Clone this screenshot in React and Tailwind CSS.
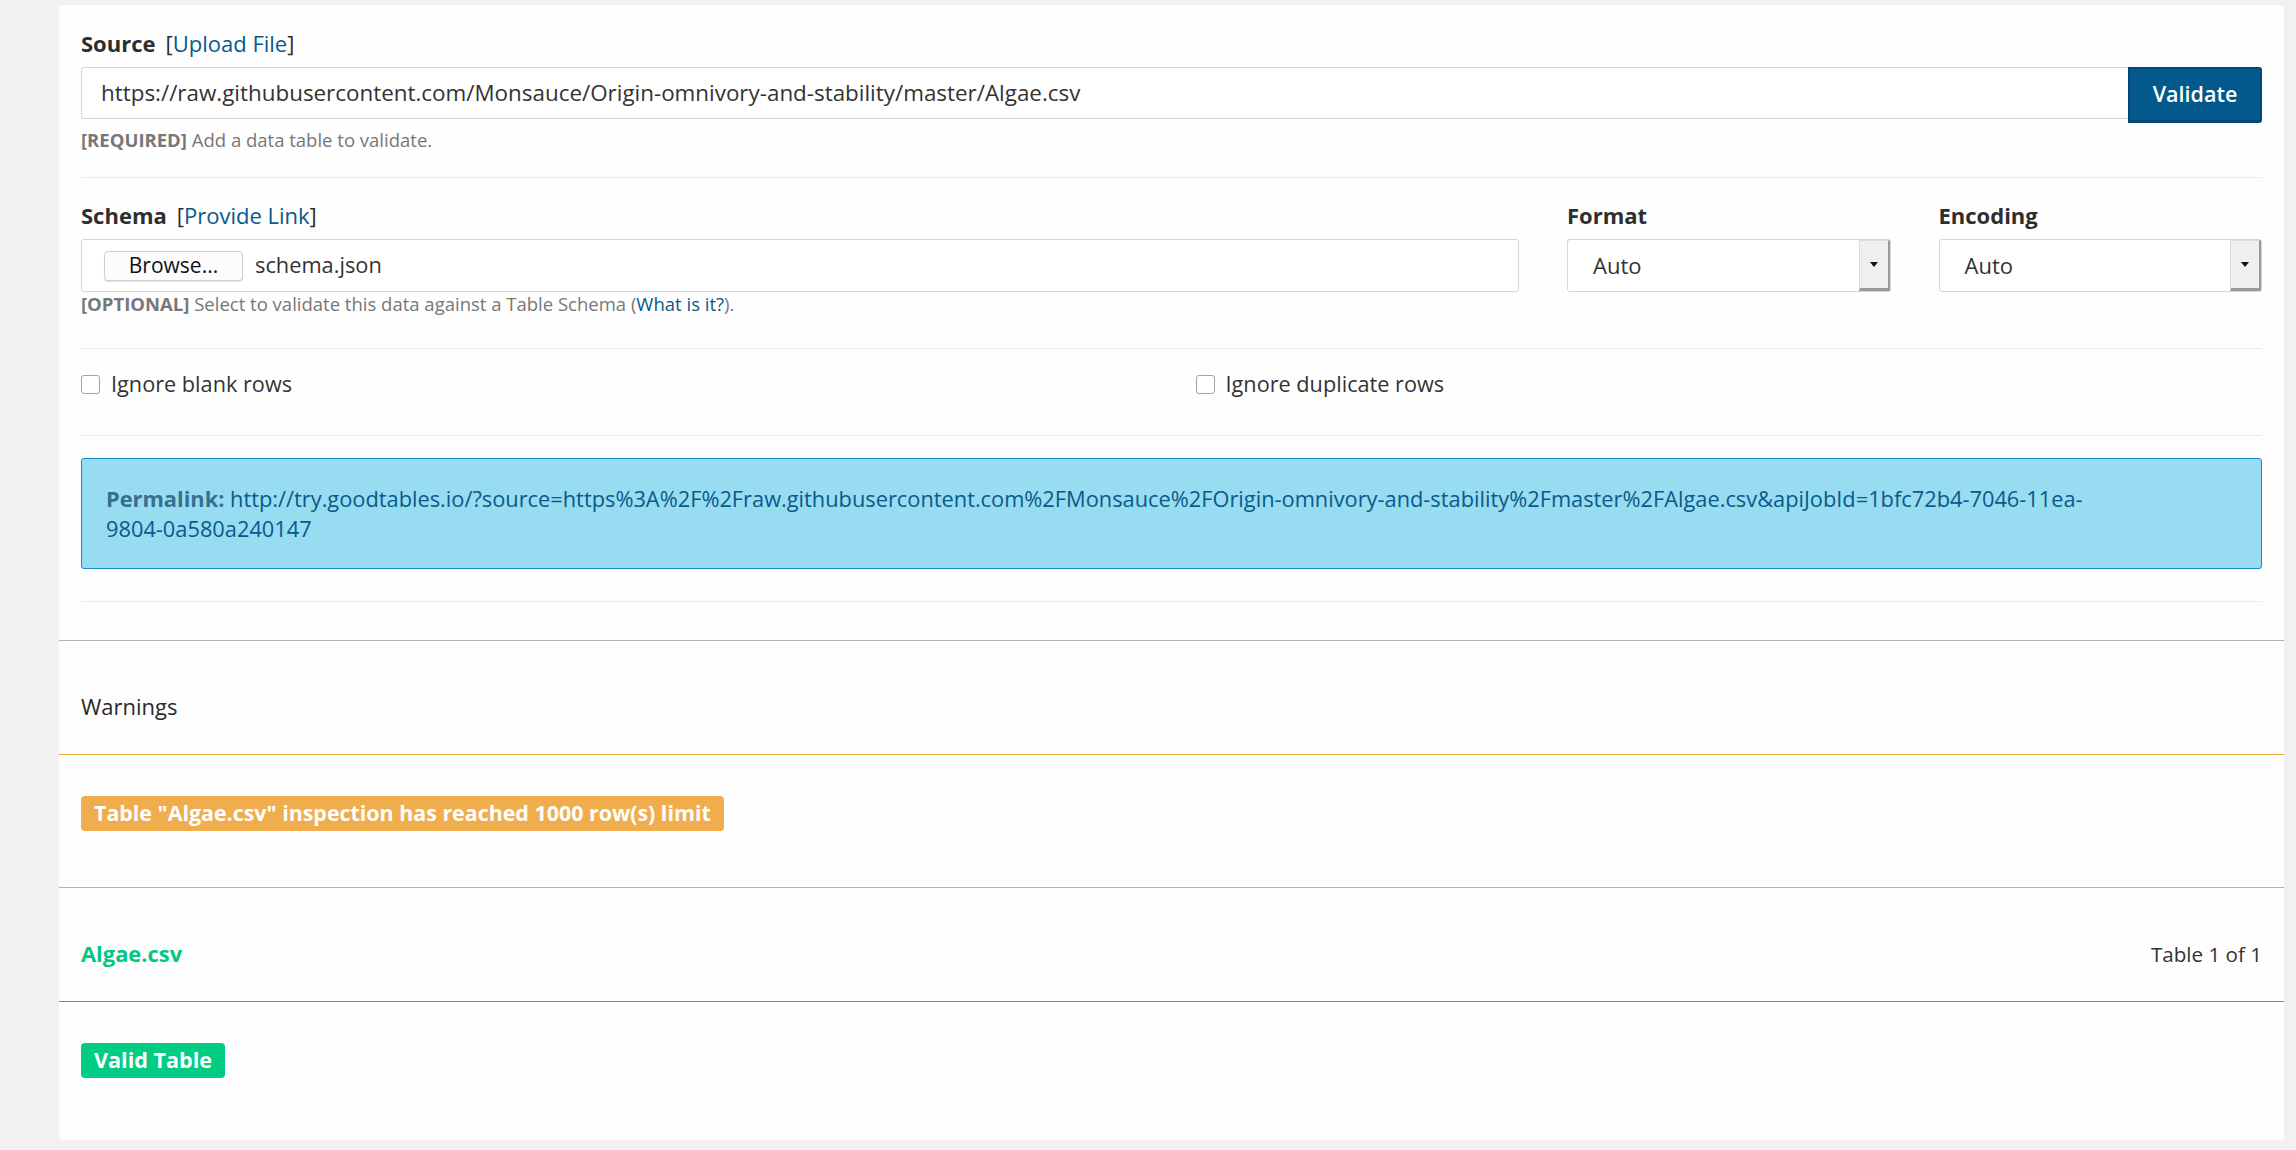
import React from "react";

function Arrow() {
  return (
    <div className="w-[31px] h-full bg-[#efefef] border-l border-l-[#dcdcdc] border-r-2 border-r-[#9a9a9a] border-b-[3px] border-b-[#9a9a9a] border-t border-t-[#dcdcdc] flex items-center justify-center">
      <svg width="8" height="5" viewBox="0 0 8 5"><path d="M0 0 L8 0 L4 5 Z" fill="#111" /></svg>
    </div>
  );
}

function Select({ label }) {
  return (
    <div className="flex flex-col">
      <div className="h-[28px] leading-[28px] text-[22px] font-bold text-[#2e2e2e]">{label}</div>
      <div className="mt-[10px] h-[53px] flex items-stretch border border-[#d6d6d6] rounded-[3px] bg-white">
        <div className="flex-1 pl-[25px] flex items-center text-[22px] text-[#333]">Auto</div>
        <Arrow />
      </div>
    </div>
  );
}

function Checkbox({ label }) {
  return (
    <div className="flex items-center h-[28px]">
      <div className="w-[19px] h-[19px] border border-[#a3a3a3] rounded-[3px] bg-white" />
      <span className="ml-[11px] text-[21.7px] text-[#333]">{label}</span>
    </div>
  );
}

export default function App() {
  return (
    <div className="min-h-screen bg-[#f1f1f1] pt-[5px] pb-[9px] pl-[59px] font-['Open_Sans',sans-serif]">
      <div className="w-[2225px] bg-[#fefefe] rounded-[4px]">
        {/* Form */}
        <div className="px-[22px] pt-[24px] pb-[38px] border-b border-b-[#b3b3b3]">
          <div className="h-[28px] leading-[28px] text-[22px] text-[#2e2e2e]">
            <span className="font-bold">Source</span>
            <span className="ml-[10px]">[<a className="text-[#07598c]">Upload File</a>]</span>
          </div>
          <div className="mt-[10px] flex items-start">
            <div className="flex-1 h-[52px] border border-[#d6d6d6] border-r-0 rounded-l-[3px] bg-white flex items-center pl-[19px] text-[22.4px] text-[#333] whitespace-nowrap overflow-hidden">
              https://raw.githubusercontent.com/Monsauce/Origin-omnivory-and-stability/master/Algae.csv
            </div>
            <button className="w-[134px] h-[56px] bg-[#03588c] border-2 border-[#014876] border-b-[3px] rounded-r-[3px] text-white text-[21.5px] font-semibold">
              Validate
            </button>
          </div>
          <div className="mt-[7px] h-[20px] leading-[20px] text-[18.5px] text-[#777]">
            <span className="font-bold">[REQUIRED]</span> Add a data table to validate.
          </div>
          <div className="mt-[27px] border-t border-t-[#ececec]" />

          <div className="mt-[23px] grid grid-cols-12 gap-x-[48px]">
            <div className="col-span-8 flex flex-col">
              <div className="h-[28px] leading-[28px] text-[22px] text-[#2e2e2e]">
                <span className="font-bold">Schema</span>
                <span className="ml-[10px]">[<a className="text-[#07598c]">Provide Link</a>]</span>
              </div>
              <div className="mt-[10px] h-[53px] border border-[#d6d6d6] rounded-[3px] bg-white flex items-center pl-[22px]">
                <div className="w-[139px] h-[30px] border border-[#d0d0d0] rounded-[4px] bg-[#fcfcfc] shadow-[0_1px_1px_rgba(0,0,0,0.12)] flex items-center justify-center text-[21px] text-[#111]">
                  Browse...
                </div>
                <span className="ml-[12px] text-[21.8px] text-[#333]">schema.json</span>
              </div>
              <div className="mt-[2px] h-[20px] leading-[20px] text-[18.5px] text-[#777]">
                <span className="font-bold">[OPTIONAL]</span> Select to validate this data against a Table Schema (
                <a className="text-[#07598c]">What is it?</a>).
              </div>
            </div>
            <div className="col-span-2">
              <Select label="Format" />
            </div>
            <div className="col-span-2">
              <Select label="Encoding" />
            </div>
          </div>
          <div className="mt-[34px] border-t border-t-[#ececec]" />

          <div className="mt-[21px] grid grid-cols-12 gap-x-[48px]">
            <div className="col-span-6">
              <Checkbox label="Ignore blank rows" />
            </div>
            <div className="col-span-6">
              <Checkbox label="Ignore duplicate rows" />
            </div>
          </div>
          <div className="mt-[37px] border-t border-t-[#ececec]" />

          <div className="mt-[22px] bg-[#97dcf1] border border-[#1a8cc4] rounded-[3px] px-[24px] pt-[25px] pb-[24px] text-[21.8px] leading-[30px]">
            <div className="whitespace-nowrap">
              <span className="font-bold text-[#37708f]">Permalink:</span>{" "}
              <a className="text-[#0a5a8a]">
                http://try.goodtables.io/?source=https%3A%2F%2Fraw.githubusercontent.com%2FMonsauce%2FOrigin-omnivory-and-stability%2Fmaster%2FAlgae.csv&amp;apiJobId=1bfc72b4-7046-11ea-
              </a>
            </div>
            <div className="whitespace-nowrap">
              <a className="text-[#0a5a8a]">9804-0a580a240147</a>
            </div>
          </div>
          <div className="mt-[32px] border-t border-t-[#ececec]" />
        </div>

        {/* Warnings */}
        <div className="border-b border-b-[#eda640] px-[22px] pt-[50px] pb-[33px]">
          <div className="h-[30px] leading-[30px] text-[22px] font-medium text-[#2a2a2a]">Warnings</div>
        </div>
        <div className="border-b border-b-[#b3b3b3] px-[22px] pt-[41px] pb-[56px]">
          <span className="inline-flex items-center h-[35px] px-[13px] rounded-[4px] bg-[#f0ad4e] text-white text-[21.4px] font-bold">
            Table "Algae.csv" inspection has reached 1000 row(s) limit
          </span>
        </div>

        {/* Table */}
        <div className="border-b border-b-[#00cf7f] px-[22px] pt-[51px] pb-[32px] flex items-center justify-between">
          <div className="h-[30px] leading-[30px] text-[21.9px] font-bold text-[#00c97f]">Algae.csv</div>
          <div className="h-[30px] leading-[30px] text-[20.6px] text-[#333]">Table 1 of 1</div>
        </div>
        <div className="px-[22px] pt-[41px] pb-[62px]">
          <span className="inline-flex items-center h-[35px] px-[13px] rounded-[4px] bg-[#00cc82] text-white text-[21.6px] font-bold">
            Valid Table
          </span>
        </div>
      </div>
    </div>
  );
}
